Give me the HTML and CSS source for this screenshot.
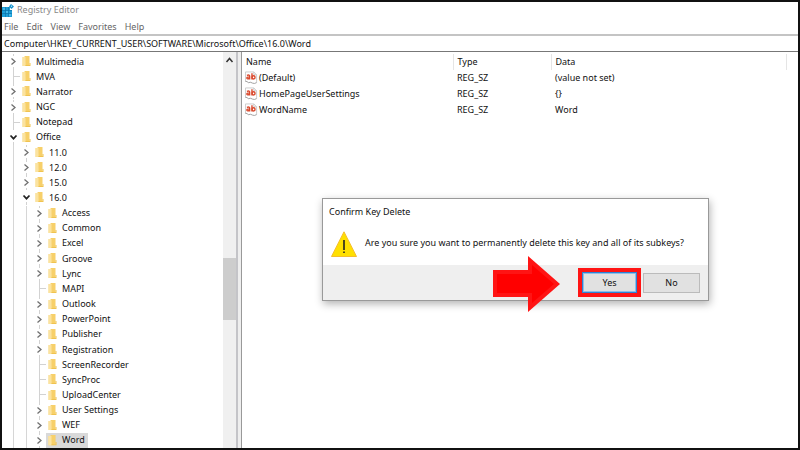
FILE: index.html
```html
<!DOCTYPE html>
<html lang="en">
<head>
<meta charset="utf-8">
<title>Registry Editor</title>
<link rel="stylesheet" href="styles.css">
</head>
<body>
<svg class="defs" aria-hidden="true">
  <symbol id="folder" viewBox="0 0 8 11"><path fill="#f9dc8c" d="M0 1h6v9H0z"/><path fill="#f7d06a" d="M2 0h5v9l-4 1z"/><path fill="#fbe3a0" d="M0 1h3v9H0z"/><path fill="#f0c350" d="M7 7h1v3H3V9h4z"/></symbol>
  <symbol id="closed" viewBox="0 0 13 15"><path d="M6.500 0v2M6.500 13v2" stroke="#d2d2d2"/><path d="M4.500 4.500l3.500 3-3.500 3" fill="none" stroke="#707070" stroke-width="1.300"/></symbol>
  <symbol id="open" viewBox="0 0 13 15"><path d="M6.500 12v3" stroke="#d2d2d2"/><path d="M3.500 5.500l3 3.200 3-3.200" fill="none" stroke="#222" stroke-width="1.700"/></symbol>
  <symbol id="string" viewBox="0 0 14 14"><path d="M.5 11V.5h9l3 3V12M9.500.5v3h3" fill="#fff" stroke="#c9c9c9"/><path d="M.5 10.500q2 0 3 1.500 3-1 4.500.5 2 1 4.500-.5" fill="none" stroke="#999"/><g fill="none" stroke="#d9482c" stroke-width="1.500"><path d="M2 4.200q3-1 3 .8V8.500M5 5.800q-3-.2-3 1.200 0 1.600 3 .4M7.500 1.800v6.700"/><ellipse cx="9.200" cy="6.300" rx="1.600" ry="1.800"/></g></symbol>
</svg>
<div class="window">
  <header class="titlebar">
    <svg class="app-icon" viewBox="0 0 12 13" aria-hidden="true"><path fill="#1e9fd8" d="M0 3h8v3h2v7H0z"/><path d="M0 6.500h10M0 9.500h10M3.500 3v10M6.500 3v10" stroke="#0b6fa5" stroke-width=".6"/><path fill="#45b8e8" d="M1 4h2v2H1zM4 7h2v2H4zM7 10h2v2H7z"/><path fill="#1b93cc" d="M9 0l3 2.500L9.500 5 7 2.500z"/><path fill="#9edcf5" d="M9 1.500h1v1.500H9z"/></svg>
    <span>Registry Editor</span>
  </header>
  <nav class="menu"><button>File</button><button>Edit</button><button>View</button><button>Favorites</button><button>Help</button></nav>
  <input class="address" aria-label="Address" value="Computer\HKEY_CURRENT_USER\SOFTWARE\Microsoft\Office\16.0\Word">
  <main class="panes">
    <section class="tree-pane">
      <ul class="tree">
        <li><button class="toggle" aria-label="Expand"><svg><use href="#closed"/></svg></button><svg class="folder"><use href="#folder"/></svg><span class="key">Multimedia</span></li>
        <li><i class="branch"></i><svg class="folder"><use href="#folder"/></svg><span class="key">MVA</span></li>
        <li><button class="toggle" aria-label="Expand"><svg><use href="#closed"/></svg></button><svg class="folder"><use href="#folder"/></svg><span class="key">Narrator</span></li>
        <li><button class="toggle" aria-label="Expand"><svg><use href="#closed"/></svg></button><svg class="folder"><use href="#folder"/></svg><span class="key">NGC</span></li>
        <li><i class="branch"></i><svg class="folder"><use href="#folder"/></svg><span class="key">Notepad</span></li>
        <li><button class="toggle" aria-label="Collapse"><svg><use href="#open"/></svg></button><svg class="folder"><use href="#folder"/></svg><span class="key">Office</span></li>
        <li><i class="guide"></i><button class="toggle" aria-label="Expand"><svg><use href="#closed"/></svg></button><svg class="folder"><use href="#folder"/></svg><span class="key">11.0</span></li>
        <li><i class="guide"></i><button class="toggle" aria-label="Expand"><svg><use href="#closed"/></svg></button><svg class="folder"><use href="#folder"/></svg><span class="key">12.0</span></li>
        <li><i class="guide"></i><button class="toggle" aria-label="Expand"><svg><use href="#closed"/></svg></button><svg class="folder"><use href="#folder"/></svg><span class="key">15.0</span></li>
        <li><i class="guide"></i><button class="toggle" aria-label="Collapse"><svg><use href="#open"/></svg></button><svg class="folder"><use href="#folder"/></svg><span class="key">16.0</span></li>
        <li><i class="guide"></i><i class="guide"></i><button class="toggle" aria-label="Expand"><svg><use href="#closed"/></svg></button><svg class="folder"><use href="#folder"/></svg><span class="key">Access</span></li>
        <li><i class="guide"></i><i class="guide"></i><button class="toggle" aria-label="Expand"><svg><use href="#closed"/></svg></button><svg class="folder"><use href="#folder"/></svg><span class="key">Common</span></li>
        <li><i class="guide"></i><i class="guide"></i><button class="toggle" aria-label="Expand"><svg><use href="#closed"/></svg></button><svg class="folder"><use href="#folder"/></svg><span class="key">Excel</span></li>
        <li><i class="guide"></i><i class="guide"></i><button class="toggle" aria-label="Expand"><svg><use href="#closed"/></svg></button><svg class="folder"><use href="#folder"/></svg><span class="key">Groove</span></li>
        <li><i class="guide"></i><i class="guide"></i><button class="toggle" aria-label="Expand"><svg><use href="#closed"/></svg></button><svg class="folder"><use href="#folder"/></svg><span class="key">Lync</span></li>
        <li><i class="guide"></i><i class="guide"></i><i class="branch"></i><svg class="folder"><use href="#folder"/></svg><span class="key">MAPI</span></li>
        <li><i class="guide"></i><i class="guide"></i><button class="toggle" aria-label="Expand"><svg><use href="#closed"/></svg></button><svg class="folder"><use href="#folder"/></svg><span class="key">Outlook</span></li>
        <li><i class="guide"></i><i class="guide"></i><button class="toggle" aria-label="Expand"><svg><use href="#closed"/></svg></button><svg class="folder"><use href="#folder"/></svg><span class="key">PowerPoint</span></li>
        <li><i class="guide"></i><i class="guide"></i><button class="toggle" aria-label="Expand"><svg><use href="#closed"/></svg></button><svg class="folder"><use href="#folder"/></svg><span class="key">Publisher</span></li>
        <li><i class="guide"></i><i class="guide"></i><button class="toggle" aria-label="Expand"><svg><use href="#closed"/></svg></button><svg class="folder"><use href="#folder"/></svg><span class="key">Registration</span></li>
        <li><i class="guide"></i><i class="guide"></i><i class="branch"></i><svg class="folder"><use href="#folder"/></svg><span class="key">ScreenRecorder</span></li>
        <li><i class="guide"></i><i class="guide"></i><i class="branch"></i><svg class="folder"><use href="#folder"/></svg><span class="key">SyncProc</span></li>
        <li><i class="guide"></i><i class="guide"></i><i class="branch"></i><svg class="folder"><use href="#folder"/></svg><span class="key">UploadCenter</span></li>
        <li><i class="guide"></i><i class="guide"></i><button class="toggle" aria-label="Expand"><svg><use href="#closed"/></svg></button><svg class="folder"><use href="#folder"/></svg><span class="key">User Settings</span></li>
        <li><i class="guide"></i><i class="guide"></i><button class="toggle" aria-label="Expand"><svg><use href="#closed"/></svg></button><svg class="folder"><use href="#folder"/></svg><span class="key">WEF</span></li>
        <li class="selected"><i class="guide"></i><i class="guide"></i><button class="toggle" aria-label="Expand"><svg><use href="#closed"/></svg></button><svg class="folder"><use href="#folder"/></svg><span class="key">Word</span></li>
      </ul>
      <div class="scrollbar">
        <button class="scroll-up" aria-label="Scroll up"><svg viewBox="0 0 13 16"><path d="M3.500 10l3-3.500 3 3.500" fill="none" stroke="#333" stroke-width="1.500"/></svg></button>
        <div class="track-above"></div>
        <div class="thumb"></div>
        <div class="track-below"></div>
      </div>
    </section>
    <section class="list-pane">
      <table class="values">
        <colgroup><col class="col-name"><col class="col-type"><col><col class="col-end"></colgroup>
        <thead><tr><th>Name</th><th>Type</th><th>Data</th><td></td></tr></thead>
        <tbody>
          <tr><td><div class="value"><svg><use href="#string"/></svg>(Default)</div></td><td>REG_SZ</td><td>(value not set)</td><td></td></tr>
          <tr><td><div class="value"><svg><use href="#string"/></svg>HomePageUserSettings</div></td><td>REG_SZ</td><td>{}</td><td></td></tr>
          <tr><td><div class="value"><svg><use href="#string"/></svg>WordName</div></td><td>REG_SZ</td><td>Word</td><td></td></tr>
        </tbody>
      </table>
    </section>
  </main>
  <div class="dialog" role="dialog" aria-labelledby="dialog-title">
    <h1 id="dialog-title">Confirm Key Delete</h1>
    <div class="message">
      <svg viewBox="0 0 26 26" aria-hidden="true"><path d="M13 .8L25.500 25.500H.5z" fill="#ffe000" stroke="#f5bd2c"/><path d="M13 9v10M13 20.500v1.500" stroke="#222" stroke-width="1.600"/></svg>
      <p>Are you sure you want to permanently delete this key and all of its subkeys?</p>
    </div>
    <div class="actions">
      <span class="highlight"><button class="default">Yes</button></span>
      <button>No</button>
    </div>
    <svg class="arrow" viewBox="0 0 67 56" aria-hidden="true"><path d="M0 14h35V0l32 28-32 28V41H0z" fill="#ff1414"/><path d="M4 18h35V9l22 19-22 19V37H4z" fill="#f00"/></svg>
  </div>
</div>
</body>
</html>
```

FILE: styles.css
```css
* { box-sizing: border-box; }
body { margin: 0; font: 9px/14px "Noto Sans", "Open Sans", sans-serif; color: #111; }
button, input { font: inherit; color: inherit; padding: 0; border: 0; background: none; border-radius: 0; }
svg { display: block; flex: none; }
.defs { position: absolute; width: 0; height: 0; }
.window { position: relative; display: flex; flex-direction: column; height: 100vh; border: 2px solid #111; background: #fff; }

.titlebar { display: flex; align-items: center; gap: 3px; height: 16px; color: #888; }
.app-icon { width: 12px; height: 13px; }
.menu { display: flex; align-items: center; gap: 8px; height: 18px; padding: 2px 2px 0; border-bottom: 2px solid #c4c4c4; color: #666; }
.address { width: 100%; height: 16px; padding: 0 2px; border-bottom: 1px solid #777; outline: 0; }

.panes { display: flex; flex: 1; min-height: 0; }
.tree-pane { display: flex; width: 240px; border-right: 1px solid #999; }
.tree-pane::after { content: ""; width: 3px; border-left: 2px solid #c4c4c8; background: #eee; }
.tree { display: flex; flex-direction: column; flex: 1; margin: 0; padding: 2px 0 0 5px; list-style: none; }
.tree li { display: flex; align-items: center; flex: 1; min-height: 0; }
.toggle, .guide, .branch { flex: none; width: 13px; height: 100%; }
.toggle svg { width: 13px; height: 15px; }
.guide, .branch { background: linear-gradient(#d6d6d6, #d6d6d6) 6px 0 / 1px 100% no-repeat; }
.branch { background: linear-gradient(#d2d2d2, #d2d2d2) 6px 0 / 1px 100% no-repeat, linear-gradient(#d2d2d2, #d2d2d2) 6px 7px / 7px 1px no-repeat; }
.folder { width: 13px; height: 11px; }
.key { padding: 0 3px; }
.selected .folder, .selected .key { height: 100%; background: #d9d9d9; }
.selected .folder { padding: 2px 0; }

.scrollbar { display: flex; flex-direction: column; width: 13px; background: #f0f0f0; }
.scroll-up { height: 16px; }
.scroll-up svg { width: 13px; height: 16px; }
.track-above { flex: 190; }
.thumb { flex: 63; background: #cdcdcd; }
.track-below { flex: 128; }

.list-pane { flex: 1; min-width: 0; padding-top: 2px; }
.values { width: 100%; table-layout: fixed; border-collapse: collapse; }
.col-name { width: 211px; }
.col-type { width: 98px; }
.col-end { width: 12px; }
.values th, .values td { height: 16px; padding: 0 0 0 4px; text-align: left; font-weight: 400; line-height: 14px; }
.values thead :not(:first-child) { border-left: 1px solid #e5e5e5; }
.value { display: flex; align-items: center; gap: 1px; margin-left: -1px; }
.value svg { width: 13px; height: 14px; }

.dialog { position: absolute; left: 320px; top: 196px; width: 387px; border: 1px solid #999; background: #fff; box-shadow: 1px 3px 8px rgba(0, 0, 0, .3); }
.dialog h1 { margin: 0; padding: 6px; font-size: inherit; font-weight: 400; line-height: 14px; }
.message { display: flex; gap: 8px; padding: 6px 8px 8px; }
.message svg { width: 26px; height: 26px; }
.message p { margin: 0; padding-top: 5px; }
.actions { display: flex; justify-content: flex-end; align-items: center; gap: 2px; height: 35px; padding-right: 8px; background: #efefef; }
.actions button { width: 57px; height: 20px; border: 1px solid #bbb; background: #e1e1e1; }
.highlight { border: 4px solid #ff1414; }
.actions .highlight .default { display: block; width: 55px; height: 21px; border: 1px solid #2b83d6; box-shadow: inset 0 0 0 1px #8fbde6; }
.arrow { position: absolute; left: 170px; top: 57px; width: 67px; height: 56px; }
```
